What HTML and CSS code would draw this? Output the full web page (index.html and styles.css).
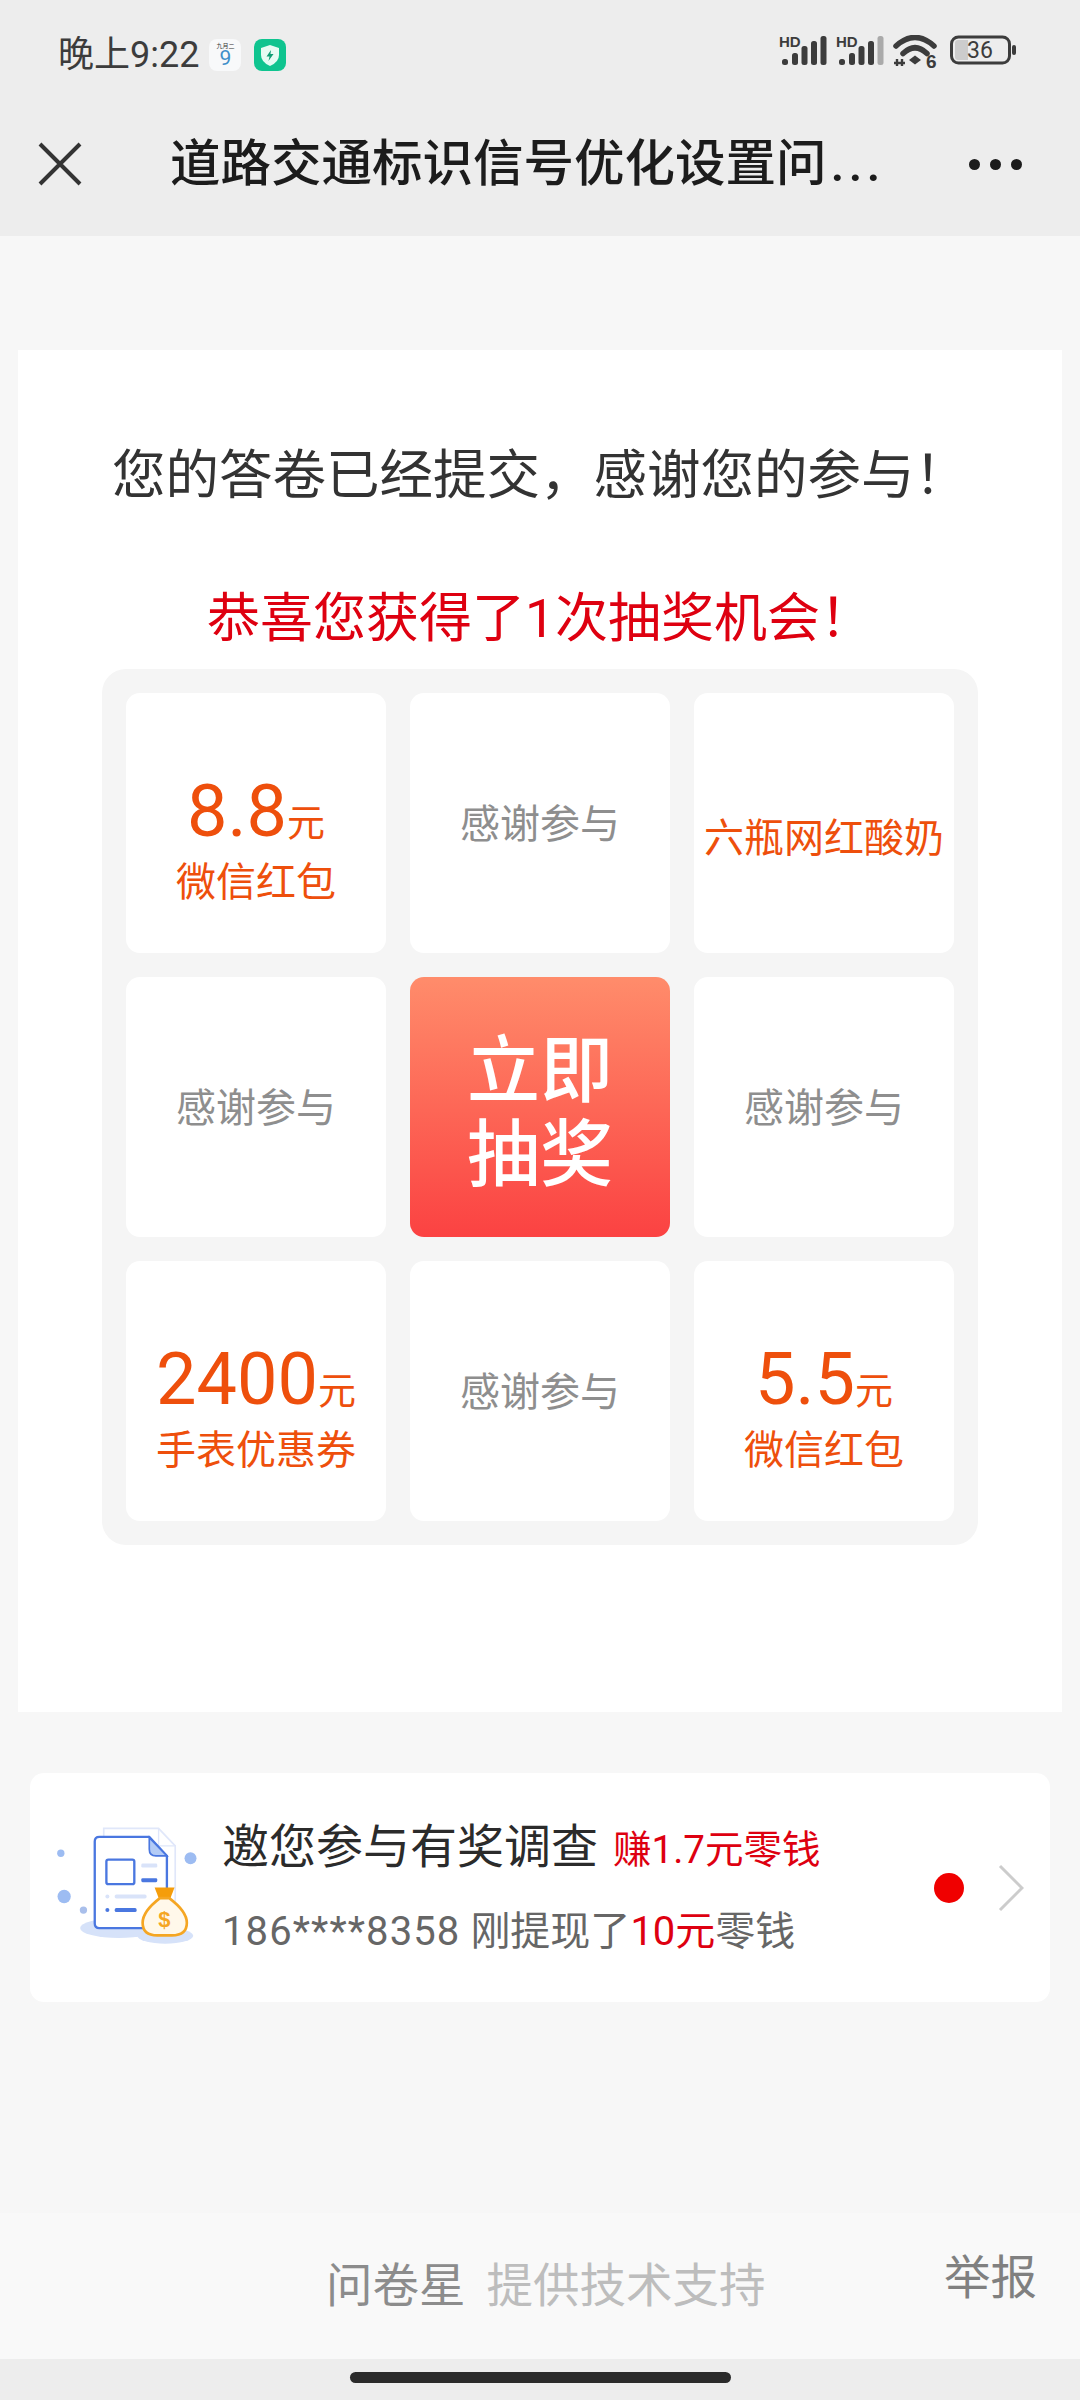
FILE: index.html
```html
<!DOCTYPE html>
<html lang="zh-CN">
<head>
    <meta charset="UTF-8">
    <meta name="viewport" content="width=device-width, initial-scale=1.0">
    <title>问卷星</title>
    <link rel="stylesheet" href="styles.css">
</head>
<body>
    <header class="top-bar">
        <div class="status-bar">
            <span class="status-time">晚上9:22</span>
            <span class="app-icon app-calendar"><i>九月二</i><b>9</b></span>
            <span class="app-icon app-shield">
                <svg viewBox="0 0 32 32" width="32" height="32">
                    <path d="M16 6 L25 9 V16 Q25 23 16 27 Q7 23 7 16 V9 Z" fill="#e6fbf3"/>
                    <path d="M17 11 L12.5 17.5 H15.5 L14.5 22 L19.5 15 H16.5 Z" fill="#0f9e74"/>
                </svg>
            </span>
            <div class="status-right">
                <svg class="signal" viewBox="0 -4 48 34" width="48" height="34">
                    <text x="0" y="12" class="hd-text">HD</text>
                    <rect x="3" y="24" width="6" height="6" rx="2.5" fill="#3c3c3c"/>
                    <rect x="13" y="18" width="6" height="12" rx="2.5" fill="#3c3c3c"/>
                    <rect x="22.5" y="11" width="6" height="19" rx="2.5" fill="#3c3c3c"/>
                    <rect x="32" y="6" width="6" height="24" rx="2.5" fill="#3c3c3c"/>
                    <rect x="41.5" y="1" width="6" height="29" rx="2.5" fill="#3c3c3c"/>
                </svg>
                <svg class="signal" viewBox="0 -4 48 34" width="48" height="34">
                    <text x="0" y="12" class="hd-text">HD</text>
                    <rect x="3" y="24" width="6" height="6" rx="2.5" fill="#3c3c3c"/>
                    <rect x="13" y="18" width="6" height="12" rx="2.5" fill="#3c3c3c"/>
                    <rect x="22.5" y="11" width="6" height="19" rx="2.5" fill="#3c3c3c"/>
                    <rect x="32" y="6" width="6" height="24" rx="2.5" fill="#3c3c3c"/>
                    <rect x="41.5" y="1" width="6" height="29" rx="2.5" fill="#aaaaaa"/>
                </svg>
                <svg class="wifi" viewBox="0 0 48 40" width="48" height="40">
                    <path d="M3 11 Q22 -6 41 11" fill="none" stroke="#3c3c3c" stroke-width="5.5" stroke-linecap="round"/>
                    <path d="M10 18.5 Q22 7 34 18.5" fill="none" stroke="#3c3c3c" stroke-width="5.5" stroke-linecap="round"/>
                    <path d="M16 25 L22 20.5 L28 25 L22 29.5 Z" fill="#3c3c3c"/>
                    <path d="M4 24 V31 M9 24 V31 M1 28 H12" fill="none" stroke="#3c3c3c" stroke-width="2.4"/>
                    <text x="33" y="33" class="wifi-text">6</text>
                </svg>
                <svg class="battery" viewBox="0 0 67 30" width="67" height="30">
                    <rect x="1.5" y="2" width="58" height="26" rx="7" fill="none" stroke="#3c3c3c" stroke-width="3"/>
                    <path d="M8 5 H18 V25 H8 Q5 25 5 22 V8 Q5 5 8 5 Z" fill="#cccccc"/>
                    <rect x="62" y="10" width="4" height="10" rx="2" fill="#3c3c3c"/>
                    <text x="30" y="23" class="battery-text">36</text>
                </svg>
            </div>
        </div>
        <nav class="nav-bar">
            <svg class="nav-close" viewBox="0 0 44 44" width="44" height="44">
                <path d="M2 2 L42 42 M42 2 L2 42" stroke="#333" stroke-width="4"/>
            </svg>
            <h1 class="nav-title">道路交通标识信号优化设置问<span class="nav-dots">...</span></h1>
            <div class="nav-more"><span></span><span></span><span></span></div>
        </nav>
    </header>

    <main class="page">
        <section class="result-card">
            <h2 class="result-title">您的答卷已经提交，感谢您的参与！</h2>
            <p class="lottery-tip">恭喜您获得了1次抽奖机会！</p>
            <div class="lottery-grid">
                <div class="prize-cell prize">
                    <div class="prize-value">8.8<small>元</small></div>
                    <div class="prize-name">微信红包</div>
                </div>
                <div class="prize-cell thanks">感谢参与</div>
                <div class="prize-cell prize prize-solo">
                    <div class="prize-name">六瓶网红酸奶</div>
                </div>
                <div class="prize-cell thanks">感谢参与</div>
                <div class="prize-cell draw-btn">立即<br>抽奖</div>
                <div class="prize-cell thanks">感谢参与</div>
                <div class="prize-cell prize">
                    <div class="prize-value">2400<small>元</small></div>
                    <div class="prize-name">手表优惠券</div>
                </div>
                <div class="prize-cell thanks">感谢参与</div>
                <div class="prize-cell prize">
                    <div class="prize-value">5.5<small>元</small></div>
                    <div class="prize-name">微信红包</div>
                </div>
            </div>
        </section>

        <section class="promo-card">
            <svg class="promo-icon" viewBox="100 190 450 400" width="150" height="133">
                <ellipse cx="300" cy="512" rx="116" ry="30" fill="#d6e2f9"/>
                <ellipse cx="440" cy="535" rx="84" ry="24" fill="#d6e2f9"/>
                <path d="M255 235 V212 H420 L470 265 V490" fill="#fff" stroke="#e0e7fa" stroke-width="5"/>
                <path d="M420 214 V265 H470" fill="none" stroke="#e0e7fa" stroke-width="4"/>
                <path d="M242 238 H392 L445 295 V500 Q445 512 432 512 H242 Q228 512 228 498 V252 Q228 238 242 238 Z" fill="#fff" stroke="#4a77e0" stroke-width="7"/>
                <path d="M392 240 L445 295 H412 Q392 295 392 275 Z" fill="#b3cbf6" stroke="#4a77e0" stroke-width="5"/>
                <rect x="263" y="306" width="84" height="74" rx="6" fill="none" stroke="#4a77e0" stroke-width="7"/>
                <rect x="368" y="318" width="48" height="12" rx="4" fill="#d9e3f9"/>
                <rect x="368" y="362" width="48" height="12" rx="4" fill="#4a77e0"/>
                <circle cx="266" cy="417" r="6" fill="#d9e3f9"/>
                <rect x="288" y="411" width="96" height="12" rx="5" fill="#d9e3f9"/>
                <circle cx="266" cy="458" r="6" fill="#4a77e0"/>
                <rect x="288" y="452" width="66" height="12" rx="5" fill="#4a77e0"/>
                <circle cx="126" cy="287" r="11" fill="#9dbcf2"/>
                <circle cx="516" cy="302" r="18" fill="#9dbcf2"/>
                <circle cx="136" cy="417" r="20" fill="#9dbcf2"/>
                <circle cx="194" cy="458" r="11" fill="#a9bfeb"/>
                <path d="M408 390 H468 L454 426 H422 Z" fill="#f59d0b"/>
                <path d="M424 422 H452 Q505 462 505 496 Q505 534 460 534 H416 Q372 534 372 496 Q372 462 424 422 Z" fill="#fff8ea" stroke="#f5a623" stroke-width="8"/>
                <text x="437" y="510" class="bag-text">$</text>
            </svg>
            <div class="promo-text">
                <div class="promo-title">邀您参与有奖调查<span class="promo-earn">赚1.7元零钱</span></div>
                <div class="promo-sub"><span class="promo-phone">186****8358</span>刚提现了<em>10元</em>零钱</div>
            </div>
            <span class="promo-dot"></span>
            <svg class="promo-arrow" viewBox="0 0 26 48" width="26" height="48">
                <path d="M2 2 L24 24 L2 46" fill="none" stroke="#cccccc" stroke-width="3"/>
            </svg>
        </section>
    </main>

    <footer class="page-footer">
        <span class="brand">问卷星</span>
        <span class="support">提供技术支持</span>
        <a class="report">举报</a>
    </footer>
    <div class="home-bar"><span></span></div>
</body>
</html>
```

FILE: styles.css
```css
* {
    box-sizing: border-box;
}

body {
    margin: 0;
    background: #f7f7f7;
    font-family: Roboto, "Noto Sans CJK SC", sans-serif;
    color: #333;
}

/* top bar */
.top-bar {
    height: 236px;
    background: #ededed;
}

.status-bar {
    height: 84px;
    padding: 25px 63px 0 58px;
    display: flex;
    align-items: center;
}

.status-time {
    font-size: 36px;
    line-height: 44px;
    color: #3c3c3c;
}

.app-icon {
    width: 32px;
    height: 32px;
    border-radius: 8px;
    margin-left: 13px;
    display: flex;
    flex-direction: column;
    align-items: center;
    overflow: hidden;
}

.app-calendar {
    margin-left: 10px;
    background: #f8f9fa;
    color: #3e8fc9;
}

.app-calendar i {
    font-size: 6px;
    line-height: 7px;
    margin-top: 3px;
    font-style: normal;
    color: #333;
}

.app-calendar b {
    font-size: 21px;
    line-height: 19px;
    font-weight: 400;
}

.app-shield {
    background: #0fc48f;
}

.status-right {
    margin-left: auto;
    display: flex;
    align-items: flex-start;
    gap: 9px;
}

.signal {
    margin-top: -4px;
}

.hd-text {
    font: 700 15px "Liberation Sans", sans-serif;
    fill: #3c3c3c;
}

.wifi-text {
    font: 700 19px "Liberation Sans", sans-serif;
    fill: #3c3c3c;
}

.battery-text {
    font: 400 23px Roboto, sans-serif;
    fill: #3c3c3c;
    text-anchor: middle;
}

.nav-bar {
    height: 152px;
    padding: 8px 32px 0 38px;
    display: flex;
    align-items: center;
}

.nav-close {
    flex: none;
}

.nav-title {
    margin: 0 0 0 88px;
    font-size: 50.5px;
    line-height: 70px;
    font-weight: 500;
    color: #1c1c1c;
    white-space: nowrap;
}

.nav-dots {
    letter-spacing: 4px;
    margin-left: 4px;
}

.nav-more {
    margin-left: auto;
    margin-right: 26px;
    display: flex;
    gap: 10px;
}

.nav-more span {
    width: 11px;
    height: 11px;
    border-radius: 50%;
    background: #1c1c1c;
}

/* answer result */
.result-card {
    margin: 114px 18px 0;
    padding: 88px 84px 167px;
    background: #fff;
    text-align: center;
}

.result-title {
    margin: 0;
    font-size: 53.5px;
    line-height: 76px;
    font-weight: 400;
    color: #333;
    white-space: nowrap;
}

.lottery-tip {
    margin: 67px 0 12px;
    font-size: 53px;
    line-height: 76px;
    color: #de0010;
    white-space: nowrap;
}

.lottery-grid {
    padding: 24px;
    display: grid;
    grid-template-columns: repeat(3, 260px);
    grid-auto-rows: 260px;
    gap: 24px;
    background: #f5f5f5;
    border-radius: 24px;
}

.prize-cell {
    background: #fff;
    border-radius: 14px;
    display: flex;
    flex-direction: column;
    align-items: center;
    justify-content: center;
}

.prize-cell.prize {
    padding-top: 28px;
    color: #ee4f0c;
}

.prize-cell.prize-solo {
    padding-top: 32px;
}

.thanks {
    padding-bottom: 4px;
    font-size: 40px;
    color: #8e8e8e;
}

.prize-value {
    font-size: 72px;
    line-height: 92px;
}

.prize-value small {
    font-size: 38px;
    line-height: 1;
}

.prize-name {
    font-size: 40px;
    line-height: 50px;
}

.draw-btn {
    padding-top: 12px;
    background: linear-gradient(#ff8c6b, #fb4242);
    color: #fff;
    font-size: 73px;
    font-weight: 500;
    line-height: 84px;
    text-align: center;
}

/* promo */
.promo-card {
    margin: 61px 30px 0;
    height: 229px;
    padding: 0 26px 0 22px;
    background: #fff;
    border-radius: 14px;
    display: flex;
    align-items: center;
}

.promo-icon {
    flex: none;
    margin-right: 20px;
}

.promo-text {
    flex: 1;
    padding-top: 3px;
}

.promo-title {
    font-size: 47px;
    line-height: 82px;
    color: #2b2b2b;
    white-space: nowrap;
}

.promo-earn {
    margin-left: 15px;
    font-size: 38.5px;
    color: #de0010;
}

.promo-sub {
    font-size: 40px;
    line-height: 82px;
    color: #666;
    white-space: nowrap;
}

.promo-phone {
    margin-right: 10px;
    letter-spacing: 1.1px;
}

.promo-sub em {
    font-style: normal;
    color: #de0010;
}

.promo-dot {
    flex: none;
    width: 30px;
    height: 30px;
    border-radius: 50%;
    background: #f00000;
    margin-right: 34px;
}

.promo-arrow {
    flex: none;
}

.bag-text {
    font: 700 66px "Liberation Sans", sans-serif;
    fill: #f5a623;
    text-anchor: middle;
}

/* footer */
.page-footer {
    margin-top: 211px;
    height: 146px;
    padding: 0 43px 0 326px;
    background: #f9f9f9;
    display: flex;
    align-items: center;
    font-size: 46.5px;
    line-height: 60px;
}

.brand {
    color: #8c8c8c;
}

.support {
    margin-left: 21px;
    color: #bdbdbd;
}

.report {
    margin-left: auto;
    margin-bottom: 16px;
    color: #808080;
}

.home-bar {
    height: 42px;
    padding-top: 13px;
    background: #ededed;
    display: flex;
    justify-content: center;
}

.home-bar span {
    width: 381px;
    height: 11px;
    border-radius: 6px;
    background: #2b2b2b;
}
```
